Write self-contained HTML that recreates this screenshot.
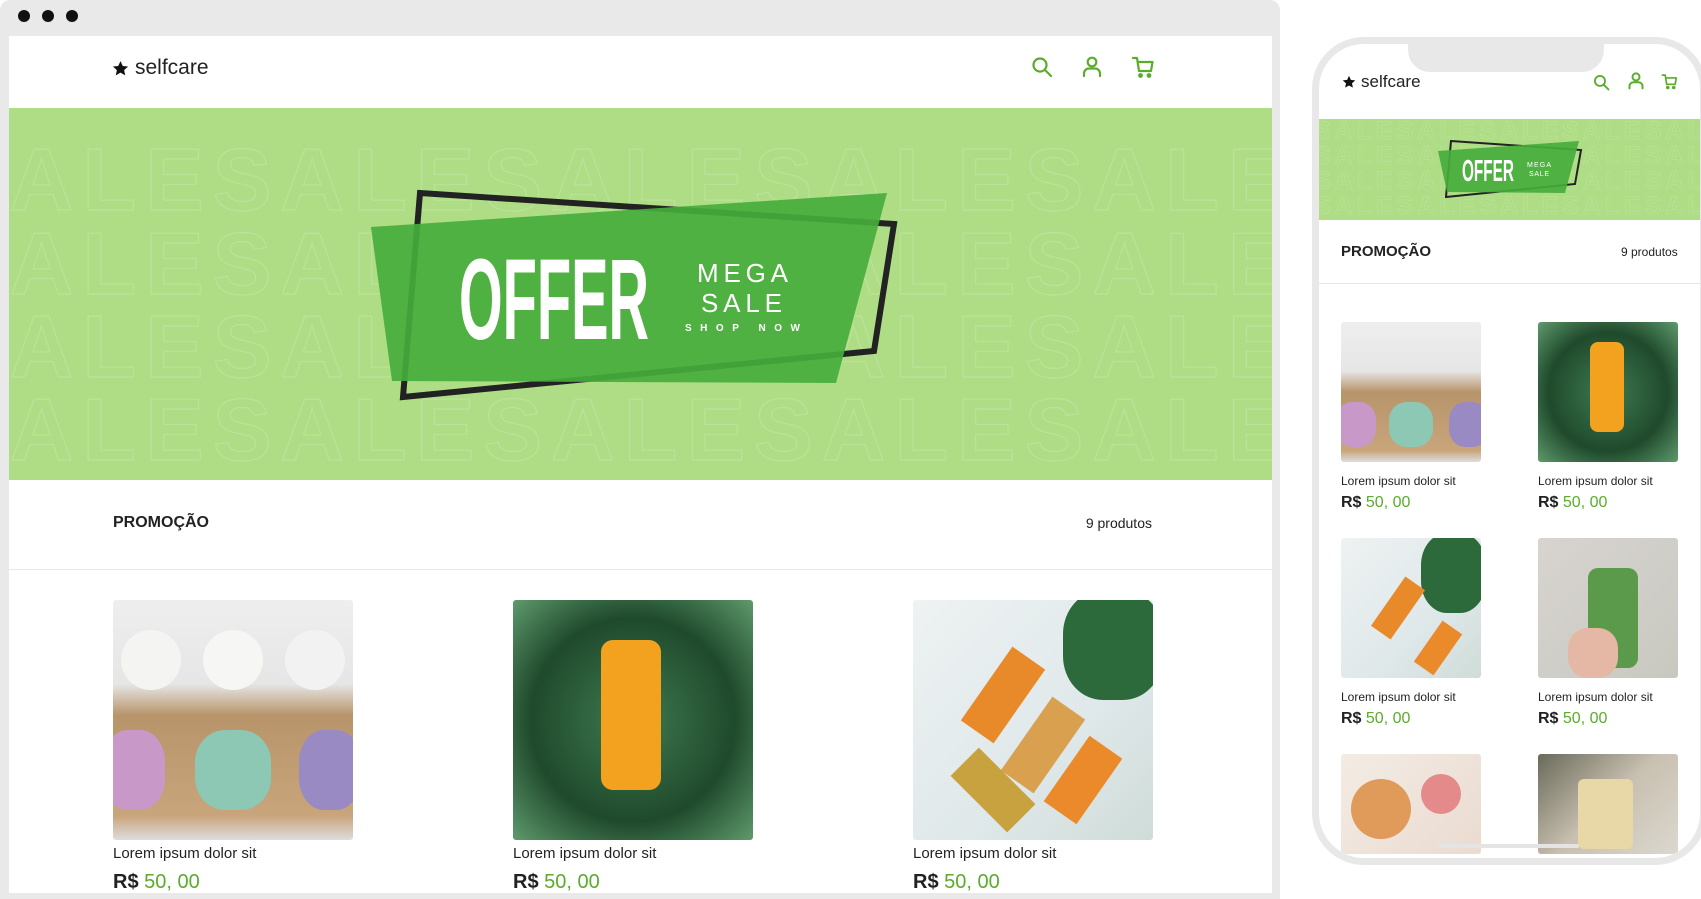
<!DOCTYPE html>
<html><head><meta charset="utf-8"><style>
*{margin:0;padding:0;box-sizing:border-box}
body{width:1701px;height:899px;background:#fff;position:relative;overflow:hidden;font-family:"Liberation Sans",sans-serif;color:#222}
.abs{position:absolute}
.win{left:0;top:0;width:1280px;height:899px;background:#e9e9e9;border-radius:10px 10px 0 0}
.dot{width:12px;height:12px;border-radius:50%;background:#111;top:10px}
.content{left:9px;top:36px;width:1263px;height:857px;background:#fff;overflow:hidden}
.logo{font-size:21px;color:#222;display:flex;align-items:center;gap:6px}
.banner{background:#aedd86;overflow:hidden}
.bgtxt{font-weight:bold;color:transparent;-webkit-text-stroke:1.2px rgba(255,255,255,.16);white-space:nowrap;line-height:1}
.name{font-size:15px;color:#222}
.price{font-size:20px;font-weight:bold;color:#222}
.price span{color:#5aac2c;font-weight:normal}
.img{border-radius:3px;overflow:hidden}
</style></head><body>
<div class="abs win"></div>
<div class="abs dot" style="left:18px"></div>
<div class="abs dot" style="left:42px"></div>
<div class="abs dot" style="left:66px"></div>
<div class="abs content">
  <div class="abs logo" style="left:103px;top:20px"><svg width="17" height="17" viewBox="0 0 24 24"><path d="M12 1.5l3.2 6.9 7.5.8-5.6 5.1 1.6 7.4L12 17.9l-6.7 3.8 1.6-7.4L1.3 9.2l7.5-.8z" fill="#111"/></svg>selfcare</div>
  <svg class="abs" style="left:1022px;top:20px" width="22" height="22" viewBox="0 0 22 22" fill="none" stroke="#5aac2c" stroke-width="2.2" stroke-linecap="round"><circle cx="9" cy="9" r="6.5"/><path d="M14 14l6 6"/></svg>
  <svg class="abs" style="left:1072px;top:20px" width="22" height="22" viewBox="0 0 22 22" fill="none" stroke="#5aac2c" stroke-width="2.2" stroke-linecap="round"><circle cx="11" cy="6" r="4.3"/><path d="M3 20v-2.5a5 5 0 0 1 5-5h6a5 5 0 0 1 5 5V20"/></svg>
  <svg class="abs" style="left:1122px;top:19px" width="24" height="24" viewBox="0 0 24 24" fill="none" stroke="#5aac2c" stroke-width="2.2" stroke-linecap="round" stroke-linejoin="round"><path d="M2 3h4l2 13h12l1.5-9H7"/><circle cx="9.5" cy="20.5" r="1.3" fill="#5aac2c"/><circle cx="18" cy="20.5" r="1.3" fill="#5aac2c"/></svg>

  <div class="abs banner" style="left:0;top:72px;width:1263px;height:372px">
    <div class="abs bgtxt" style="left:-67px;top:28px;font-size:88px;letter-spacing:9px">SALESALESALESALESALESALE</div>
    <div class="abs bgtxt" style="left:-67px;top:112px;font-size:88px;letter-spacing:9px">SALESALESALESALESALESALE</div>
    <div class="abs bgtxt" style="left:-67px;top:195px;font-size:88px;letter-spacing:9px">SALESALESALESALESALESALE</div>
    <div class="abs bgtxt" style="left:-67px;top:278px;font-size:88px;letter-spacing:9px">SALESALESALESALESALESALE</div>
    <svg class="abs" style="left:0;top:0" width="1263" height="372" viewBox="9 108 1263 372">
      <polygon points="420,193 894,224 874,351 403,397" fill="none" stroke="#222" stroke-width="6"/>
      <polygon points="371,227 887,193 836,383 392,381" fill="#47ad3c" opacity=".92"/>
      <text x="459" y="339" font-family="Liberation Sans" font-weight="bold" font-size="115" fill="#fff" textLength="190" lengthAdjust="spacingAndGlyphs">OFFER</text>
      <text x="697" y="282" font-family="Liberation Sans" font-size="26" fill="#fff" textLength="91" lengthAdjust="spacing">MEGA</text>
      <text x="701" y="312" font-family="Liberation Sans" font-size="26" fill="#fff" textLength="81" lengthAdjust="spacing">SALE</text>
      <text x="685" y="331" font-family="Liberation Sans" font-weight="bold" font-size="10" fill="#fff" textLength="115" lengthAdjust="spacing">SHOP NOW</text>
    </svg>
  </div>

  <div class="abs" style="left:104px;top:478px;font-size:16px;font-weight:bold">PROMOÇÃO</div>
  <div class="abs" style="right:120px;top:479px;font-size:14px">9 produtos</div>
  <div class="abs" style="left:0;top:533px;width:1263px;height:1px;background:#e8e8e8"></div>

  <div class="abs img" style="left:104px;top:564px;width:240px;height:240px;background:linear-gradient(180deg,#eee 0%,#e6e6e6 35%,#b8946a 48%,#c9a57c 90%,#ddd 100%)">
    <div class="abs" style="left:8px;top:30px;width:60px;height:60px;border-radius:50%;background:#f4f4f2"></div>
    <div class="abs" style="left:90px;top:30px;width:60px;height:60px;border-radius:50%;background:#f6f6f4"></div>
    <div class="abs" style="left:172px;top:30px;width:60px;height:60px;border-radius:50%;background:#f2f2f2"></div>
    <div class="abs" style="left:-10px;top:130px;width:62px;height:80px;border-radius:40%;background:#c898c8"></div>
    <div class="abs" style="left:82px;top:130px;width:76px;height:80px;border-radius:40%;background:#8cc8b4"></div>
    <div class="abs" style="left:186px;top:130px;width:62px;height:80px;border-radius:40%;background:#9a8ac4"></div>
  </div>
  <div class="abs img" style="left:504px;top:564px;width:240px;height:240px;background:radial-gradient(circle at 50% 50%,#3f7a50,#1f4a2c 60%,#5f9a6c)">
    <div class="abs" style="left:88px;top:40px;width:60px;height:150px;border-radius:12px;background:#f2a21e"></div>
  </div>
  <div class="abs img" style="left:904px;top:564px;width:240px;height:240px;background:linear-gradient(135deg,#eef2f2,#dfe8ea 60%,#cfdcd8)">
    <div class="abs" style="left:150px;top:-10px;width:100px;height:110px;border-radius:40%;background:#2c6a3c"></div>
    <div class="abs" style="left:70px;top:50px;width:40px;height:90px;background:#e98a2a;transform:rotate(35deg)"></div>
    <div class="abs" style="left:110px;top:100px;width:40px;height:90px;background:#d9a050;transform:rotate(35deg)"></div>
    <div class="abs" style="left:60px;top:150px;width:40px;height:80px;background:#c9a240;transform:rotate(-45deg)"></div>
    <div class="abs" style="left:150px;top:140px;width:40px;height:80px;background:#ea8a2a;transform:rotate(35deg)"></div>
  </div>
  <div class="abs name" style="left:104px;top:809px">Lorem ipsum dolor sit</div>
  <div class="abs name" style="left:504px;top:809px">Lorem ipsum dolor sit</div>
  <div class="abs name" style="left:904px;top:809px">Lorem ipsum dolor sit</div>
  <div class="abs price" style="left:104px;top:835px">R$ <span>50, 00</span></div>
  <div class="abs price" style="left:504px;top:835px">R$ <span>50, 00</span></div>
  <div class="abs price" style="left:904px;top:835px">R$ <span>50, 00</span></div>
</div>

<!-- phone -->
<div class="abs" style="left:1312px;top:37px;width:395px;height:828px;border:7px solid #e8e8e8;border-radius:52px;background:#fff;overflow:hidden">
  <div class="abs" style="left:89px;top:-7px;width:196px;height:35px;background:#e8e8e8;border-radius:0 0 22px 22px"></div>
  <div class="abs logo" style="left:23px;top:28px;font-size:17px;gap:5px"><svg width="14" height="14" viewBox="0 0 24 24"><path d="M12 1.5l3.2 6.9 7.5.8-5.6 5.1 1.6 7.4L12 17.9l-6.7 3.8 1.6-7.4L1.3 9.2l7.5-.8z" fill="#111"/></svg>selfcare</div>
  <svg class="abs" style="left:274px;top:30px" width="17" height="17" viewBox="0 0 22 22" fill="none" stroke="#5aac2c" stroke-width="2.4" stroke-linecap="round"><circle cx="9" cy="9" r="6.5"/><path d="M14 14l6 6"/></svg>
  <svg class="abs" style="left:308px;top:28px" width="18" height="18" viewBox="0 0 22 22" fill="none" stroke="#5aac2c" stroke-width="2.4" stroke-linecap="round"><circle cx="11" cy="6" r="4.3"/><path d="M3 20v-2.5a5 5 0 0 1 5-5h6a5 5 0 0 1 5 5V20"/></svg>
  <svg class="abs" style="left:342px;top:29px" width="17" height="17" viewBox="0 0 24 24" fill="none" stroke="#5aac2c" stroke-width="2.4" stroke-linecap="round" stroke-linejoin="round"><path d="M2 3h4l2 13h12l1.5-9H7"/><circle cx="9.5" cy="20.5" r="1.3" fill="#5aac2c"/><circle cx="18" cy="20.5" r="1.3" fill="#5aac2c"/></svg>
  <div class="abs banner" style="left:0;top:75px;width:381px;height:101px">
    <div class="abs bgtxt" style="left:-5px;top:0px;font-size:25px;letter-spacing:4px;-webkit-text-stroke:.7px rgba(255,255,255,.15)">SALESALESALESALESALESALE</div>
    <div class="abs bgtxt" style="left:-5px;top:25px;font-size:25px;letter-spacing:4px;-webkit-text-stroke:.7px rgba(255,255,255,.15)">SALESALESALESALESALESALE</div>
    <div class="abs bgtxt" style="left:-5px;top:50px;font-size:25px;letter-spacing:4px;-webkit-text-stroke:.7px rgba(255,255,255,.15)">SALESALESALESALESALESALE</div>
    <div class="abs bgtxt" style="left:-5px;top:75px;font-size:25px;letter-spacing:4px;-webkit-text-stroke:.7px rgba(255,255,255,.15)">SALESALESALESALESALESALE</div>
    <svg class="abs" style="left:0;top:0" width="381" height="101" viewBox="1319 119 381 101">
      <polygon points="1451,141 1581,150 1575,184 1446,197" fill="none" stroke="#222" stroke-width="2"/>
      <polygon points="1438,151 1579,141 1565,193 1447,192" fill="#47ad3c" opacity=".92"/>
      <text x="1462" y="181" font-family="Liberation Sans" font-weight="bold" font-size="31" fill="#fff" textLength="52" lengthAdjust="spacingAndGlyphs">OFFER</text>
      <text x="1527" y="167" font-family="Liberation Sans" font-size="7" fill="#fff" textLength="24" lengthAdjust="spacing">MEGA</text>
      <text x="1529" y="176" font-family="Liberation Sans" font-size="7" fill="#fff" textLength="20" lengthAdjust="spacing">SALE</text>
    </svg>
  </div>
  <div class="abs" style="left:22px;top:199px;font-size:15px;font-weight:bold">PROMOÇÃO</div>
  <div class="abs" style="left:302px;top:201px;font-size:12px">9 produtos</div>
  <div class="abs" style="left:0;top:239px;width:381px;height:1px;background:#e8e8e8"></div>

  <div class="abs img" style="left:22px;top:278px;width:140px;height:140px;background:linear-gradient(180deg,#eee 0%,#e6e6e6 35%,#b8946a 50%,#c9a57c 92%,#ddd 100%)">
    <div class="abs" style="left:-5px;top:80px;width:40px;height:45px;border-radius:40%;background:#c898c8"></div>
    <div class="abs" style="left:48px;top:80px;width:44px;height:45px;border-radius:40%;background:#8cc8b4"></div>
    <div class="abs" style="left:108px;top:80px;width:40px;height:45px;border-radius:40%;background:#9a8ac4"></div>
  </div>
  <div class="abs img" style="left:219px;top:278px;width:140px;height:140px;background:radial-gradient(circle,#3f7a50,#1f4a2c 60%,#5f9a6c)"><div class="abs" style="left:52px;top:20px;width:34px;height:90px;border-radius:8px;background:#f2a21e"></div></div>
  <div class="abs img" style="left:22px;top:494px;width:140px;height:140px;background:linear-gradient(135deg,#eef2f2,#dfe8ea 60%,#cfdcd8)"><div class="abs" style="left:80px;top:-5px;width:65px;height:80px;border-radius:40%;background:#2c6a3c"></div><div class="abs" style="left:45px;top:40px;width:24px;height:60px;background:#e98a2a;transform:rotate(35deg)"></div><div class="abs" style="left:85px;top:85px;width:24px;height:50px;background:#ea8a2a;transform:rotate(35deg)"></div></div>
  <div class="abs img" style="left:219px;top:494px;width:140px;height:140px;background:linear-gradient(135deg,#d8d4d0,#c8c8c0)"><div class="abs" style="left:50px;top:30px;width:50px;height:100px;border-radius:10px;background:#5a9a4a"></div><div class="abs" style="left:30px;top:90px;width:50px;height:50px;border-radius:40%;background:#e4b8a4"></div></div>
  <div class="abs img" style="left:22px;top:710px;width:140px;height:100px;background:linear-gradient(135deg,#f3ece4,#eadbd0)"><div class="abs" style="left:10px;top:25px;width:60px;height:60px;border-radius:50%;background:#e09a5a"></div><div class="abs" style="left:80px;top:20px;width:40px;height:40px;border-radius:50%;background:#e48a8a"></div></div>
  <div class="abs img" style="left:219px;top:710px;width:140px;height:100px;background:linear-gradient(135deg,#6a6a5a,#c8c0b0 50%,#dcd8d0)"><div class="abs" style="left:40px;top:25px;width:55px;height:70px;border-radius:6px;background:#e8d8a8"></div></div>

  <div class="abs name" style="left:22px;top:430px;font-size:12px">Lorem ipsum dolor sit</div>
  <div class="abs name" style="left:219px;top:430px;font-size:12px">Lorem ipsum dolor sit</div>
  <div class="abs price" style="left:22px;top:450px;font-size:16px">R$ <span>50, 00</span></div>
  <div class="abs price" style="left:219px;top:450px;font-size:16px">R$ <span>50, 00</span></div>
  <div class="abs name" style="left:22px;top:646px;font-size:12px">Lorem ipsum dolor sit</div>
  <div class="abs name" style="left:219px;top:646px;font-size:12px">Lorem ipsum dolor sit</div>
  <div class="abs price" style="left:22px;top:666px;font-size:16px">R$ <span>50, 00</span></div>
  <div class="abs price" style="left:219px;top:666px;font-size:16px">R$ <span>50, 00</span></div>
  <div class="abs" style="left:118px;top:800px;width:142px;height:4px;border-radius:2px;background:#e4e4e4"></div>
</div>
</body></html>
